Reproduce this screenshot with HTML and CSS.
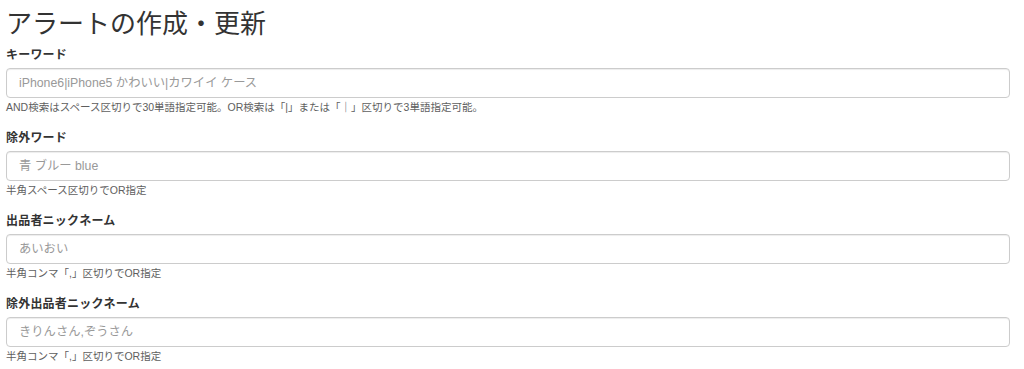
FILE: index.html
```html
<!DOCTYPE html>
<html lang="ja">
<head>
    <meta charset="UTF-8">
    <meta name="viewport" content="width=device-width, initial-scale=1.0">
    <title>アラートの作成・更新</title>
    <link rel="stylesheet" href="styles.css">
</head>
<body>
    <div class="container">
        <h1>アラートの作成・更新</h1>
        <form id="alert-form">
            <div class="form-group">
                <label for="keyword">キーワード</label>
                <input type="text" id="keyword" class="form-control" placeholder="iPhone6|iPhone5 かわいい|カワイイ ケース">
                <p class="help-block">AND検索はスペース区切りで30単語指定可能。OR検索は「|」または「｜」区切りで3単語指定可能。</p>
            </div>

            <div class="form-group">
                <label for="exclude-word">除外ワード</label>
                <input type="text" id="exclude-word" class="form-control" placeholder="青 ブルー blue">
                <p class="help-block">半角スペース区切りでOR指定</p>
            </div>

            <div class="form-group">
                <label for="seller">出品者ニックネーム</label>
                <input type="text" id="seller" class="form-control" placeholder="あいおい">
                <p class="help-block">半角コンマ「,」区切りでOR指定</p>
            </div>

            <div class="form-group">
                <label for="exclude-seller">除外出品者ニックネーム</label>
                <input type="text" id="exclude-seller" class="form-control" placeholder="きりんさん,ぞうさん">
                <p class="help-block">半角コンマ「,」区切りでOR指定</p>
            </div>
        </form>
    </div>
</body>
</html>
```

FILE: styles.css
```css
body {
    margin: 0;
    background-color: #ffffff;
    color: #333333;
    font-family: "Liberation Sans", "Noto Sans CJK JP", sans-serif;
}

.container {
    padding: 0 14px 0 6px;
}

h1 {
    margin: 6px 0 3px;
    font-size: 26px;
    line-height: 36px;
    font-weight: normal;
    color: #333333;
}

.form-group {
    margin-bottom: 13px;
}

.form-group label {
    display: block;
    margin-bottom: 4px;
    padding-top: 1px;
    font-size: 12px;
    line-height: 18px;
    font-weight: bold;
    letter-spacing: 0.2px;
    color: #333333;
}

.form-control {
    display: block;
    box-sizing: border-box;
    width: 100%;
    height: 30px;
    padding: 0 12px;
    font-family: inherit;
    font-size: 12.3px;
    color: #555555;
    border: 1px solid #cccccc;
    border-radius: 4px;
    box-shadow: inset 0 1px 1px rgba(0, 0, 0, 0.075);
    outline: none;
}

.form-control::placeholder {
    color: #999999;
}

.help-block {
    margin: 1px 0 0;
    font-size: 10.5px;
    line-height: 16px;
    color: #5e5e5e;
}
```
